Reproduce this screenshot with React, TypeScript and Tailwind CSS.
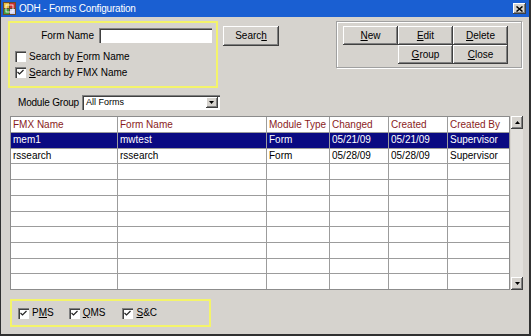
import React from "react";

const raised =
  "bg-[#d6d3ce] shadow-[inset_-1px_-1px_0_#404040,inset_1px_1px_0_#ffffff,inset_-2px_-2px_0_#808080]";
const sunken =
  "bg-white shadow-[inset_1px_1px_0_#808080,inset_2px_2px_0_#404040,inset_-1px_-1px_0_#ffffff]";

function Check({ checked = false }: { checked?: boolean }) {
  return (
    <div className={`w-[11px] h-[11px] shrink-0 ${sunken} flex items-center justify-center`}>
      {checked && (
        <svg width="7" height="7" viewBox="0 0 7 7">
          <path d="M0.5 3 L2.5 5 L6.5 1" stroke="#222" strokeWidth="1.2" fill="none" />
        </svg>
      )}
    </div>
  );
}

function Btn({ children, className = "" }: { children: React.ReactNode; className?: string }) {
  return (
    <div className={`${raised} flex items-center justify-center text-black ${className}`}>{children}</div>
  );
}

const cols = [
  { name: "FMX Name", w: "w-[107px]" },
  { name: "Form Name", w: "w-[149px]" },
  { name: "Module Type", w: "w-[63px]" },
  { name: "Changed", w: "w-[59px]" },
  { name: "Created", w: "w-[59px]" },
  { name: "Created By", w: "flex-1" },
];

const rows = [
  ["mem1", "mwtest", "Form", "05/21/09", "05/21/09", "Supervisor"],
  ["rssearch", "rssearch", "Form", "05/28/09", "05/28/09", "Supervisor"],
];

export default function App() {
  const body = Array.from({ length: 10 }).map((_, i) => rows[i] ?? ["", "", "", "", "", ""]);
  return (
    <div
      className="w-[531px] h-[336px] bg-[#d6d3ce] flex flex-col border-l border-r-2 border-b-2 border-[#303030] text-[10px] leading-none text-black overflow-hidden whitespace-nowrap"
      style={{ fontFamily: '"Liberation Sans", Arial, sans-serif' }}
    >
      {/* title bar */}
      <div className="h-[17px] bg-[#1a5fd2] flex items-center pl-[2px] pr-[3px] shrink-0">
        <svg width="13" height="13" viewBox="0 0 13 13" className="shrink-0">
          <rect x="0" y="0" width="13" height="13" fill="#6a4a2a" />
          <rect x="1" y="1" width="5" height="5" fill="#e8c040" />
          <rect x="7" y="1" width="5" height="5" fill="#c83030" />
          <rect x="1" y="7" width="5" height="5" fill="#40a040" />
          <rect x="7" y="7" width="5" height="5" fill="#d0d0f0" />
          <rect x="3" y="3" width="7" height="7" fill="none" stroke="#fff" strokeWidth="0.8" />
        </svg>
        <span className="ml-[3px] text-white text-[10px] tracking-[-0.2px]">ODH - Forms Configuration</span>
        <div className={`ml-auto w-[13px] h-[11px] ${raised} flex items-center justify-center`}>
          <svg width="7" height="6" viewBox="0 0 7 6">
            <path d="M0.5 0.5 L6.5 5.5 M6.5 0.5 L0.5 5.5" stroke="#000" strokeWidth="1.5" />
          </svg>
        </div>
      </div>

      {/* top section */}
      <div className="flex items-start mt-[4px] shrink-0">
        <div className="ml-[7px] w-[210px] h-[67px] border-2 border-[#f4f46a] flex flex-col">
          <div className="flex items-center mt-[5px]">
            <span className="w-[84px] text-right">Form Name</span>
            <div className={`ml-[5px] w-[113px] h-[15px] ${sunken}`} />
          </div>
          <div className="flex items-center mt-[8px] ml-[5px]">
            <Check />
            <span className="ml-[3px]">
              Search by <span className="underline">F</span>orm Name
            </span>
          </div>
          <div className="flex items-center mt-[5px] ml-[5px]">
            <Check checked />
            <span className="ml-[3px]">
              <span className="underline">S</span>earch by FMX Name
            </span>
          </div>
        </div>
        <Btn className="ml-[5px] mt-[5px] w-[56px] h-[20px]">
          <span>
            Searc<span className="underline">h</span>
          </span>
        </Btn>
        <div className="ml-[57px] w-[186px] h-[47px] border border-[#a0a0a0] shadow-[inset_1px_1px_0_#ffffff,1px_1px_0_#ffffff] pl-[6px] pt-[4px]">
          <div className="flex">
            <Btn className="w-[55px] h-[19px]">
              <span>
                <span className="underline">N</span>ew
              </span>
            </Btn>
            <Btn className="w-[55px] h-[19px]">
              <span>
                <span className="underline">E</span>dit
              </span>
            </Btn>
            <Btn className="w-[55px] h-[19px]">
              <span>
                <span className="underline">D</span>elete
              </span>
            </Btn>
          </div>
          <div className="flex ml-[55px]">
            <Btn className="w-[55px] h-[19px]">
              <span>
                <span className="underline">G</span>roup
              </span>
            </Btn>
            <Btn className="w-[55px] h-[19px]">
              <span>
                <span className="underline">C</span>lose
              </span>
            </Btn>
          </div>
        </div>
      </div>

      {/* module group */}
      <div className="flex items-center mt-[7px] ml-[17px] shrink-0">
        <span className="tracking-[-0.2px]">Module Group</span>
        <div className={`ml-[3px] w-[138px] h-[15px] ${sunken} flex items-center`}>
          <span className="ml-[4px] text-[9px]">All Forms</span>
          <div className={`ml-auto mr-[2px] w-[12px] h-[11px] ${raised} flex items-center justify-center`}>
            <svg width="5" height="3" viewBox="0 0 5 3">
              <path d="M0 0 H5 L2.5 3 Z" fill="#000" />
            </svg>
          </div>
        </div>
      </div>

      {/* table */}
      <div className="flex mt-[6px] ml-[9px] shrink-0">
        <div className="w-[500px] h-[174px] bg-white border border-[#8c8c8c] flex flex-col">
          <div className="flex h-[16px] border-b border-[#9c9c9c] shrink-0">
            {cols.map((c, i) => (
              <div
                key={c.name}
                className={`${c.w} ${i < cols.length - 1 ? "border-r border-[#9c9c9c]" : ""} flex items-center pl-[2px] text-[#8a1c1c] overflow-hidden`}
              >
                {c.name}
              </div>
            ))}
          </div>
          {body.map((r, ri) => (
            <div
              key={ri}
              className={`flex flex-1 ${ri < 9 ? "border-b border-[#9c9c9c]" : ""} ${ri === 0 ? "bg-[#0a0a82] text-white" : ""}`}
            >
              {cols.map((c, i) => (
                <div
                  key={c.name}
                  className={`${c.w} ${i < cols.length - 1 ? "border-r border-[#9c9c9c]" : ""} flex items-center pl-[2px] overflow-hidden`}
                >
                  {r[i]}
                </div>
              ))}
            </div>
          ))}
        </div>
        <div className="ml-[1px] w-[12px] h-[174px] bg-[#e2e0dc] flex flex-col justify-between">
          <div className={`h-[13px] ${raised} flex items-center justify-center`}>
            <svg width="5" height="3" viewBox="0 0 5 3">
              <path d="M0 3 H5 L2.5 0 Z" fill="#000" />
            </svg>
          </div>
          <div className={`h-[13px] ${raised} flex items-center justify-center`}>
            <svg width="5" height="3" viewBox="0 0 5 3">
              <path d="M0 0 H5 L2.5 3 Z" fill="#000" />
            </svg>
          </div>
        </div>
      </div>

      {/* bottom */}
      <div className="mt-[9px] ml-[9px] w-[201px] h-[28px] border-2 border-[#f4f46a] flex items-center pl-[6px] shrink-0">
        <Check checked />
        <span className="ml-[3px]">
          P<span className="underline">M</span>S
        </span>
        <div className="ml-[15px] flex items-center">
          <Check checked />
          <span className="ml-[3px]">
            <span className="underline">Q</span>MS
          </span>
        </div>
        <div className="ml-[17px] flex items-center">
          <Check checked />
          <span className="ml-[3px]">
            <span className="underline">S</span>&amp;C
          </span>
        </div>
      </div>
    </div>
  );
}
